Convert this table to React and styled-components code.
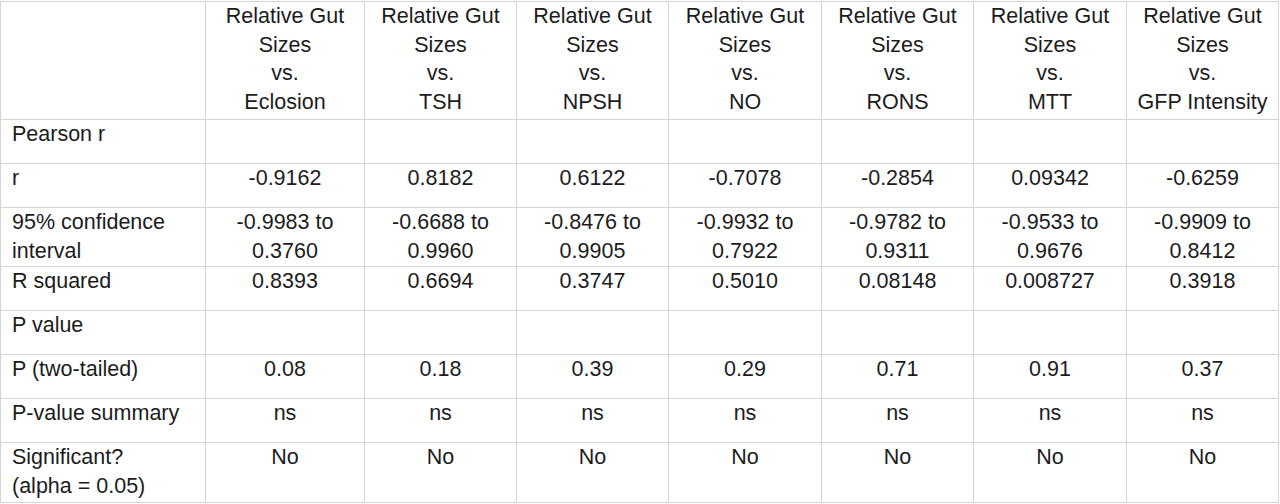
import React from "react";
import styled, { createGlobalStyle } from "styled-components";

const GlobalStyle = createGlobalStyle`
  html, body {
    margin: 0;
    padding: 0;
    background: #ffffff;
  }
  body {
    padding-top: 1px;
  }
`;

const Table = styled.table`
  border-collapse: collapse;
  table-layout: fixed;
  width: 1279px;
  font-family: "Liberation Sans", Arial, sans-serif;
  font-size: 21.5px;
  line-height: 28.5px;
  color: #1c1c1c;
`;

const Row = styled.tr`
  height: ${(props) => props.h}px;
`;

const Cell = styled.td`
  border: 1px solid #d4d4d4;
  padding: 0 4px;
  vertical-align: top;
  text-align: ${(props) => (props.label ? "left" : "center")};
  padding-left: ${(props) => (props.label ? "11px" : "4px")};
  white-space: pre-line;
  overflow: hidden;
`;

const widths = [205, 159, 152, 152, 153, 152, 153, 152];

const targets = ["Eclosion", "TSH", "NPSH", "NO", "RONS", "MTT", "GFP Intensity"];

const rows = [
  { label: "Pearson r", h: 44, values: [] },
  {
    label: "r",
    h: 44,
    values: ["-0.9162", "0.8182", "0.6122", "-0.7078", "-0.2854", "0.09342", "-0.6259"],
  },
  {
    label: "95% confidence\ninterval",
    h: 59,
    values: [
      "-0.9983 to\n0.3760",
      "-0.6688 to\n0.9960",
      "-0.8476 to\n0.9905",
      "-0.9932 to\n0.7922",
      "-0.9782 to\n0.9311",
      "-0.9533 to\n0.9676",
      "-0.9909 to\n0.8412",
    ],
  },
  {
    label: "R squared",
    h: 44,
    values: ["0.8393", "0.6694", "0.3747", "0.5010", "0.08148", "0.008727", "0.3918"],
  },
  { label: "P value", h: 44, values: [] },
  {
    label: "P (two-tailed)",
    h: 44,
    values: ["0.08", "0.18", "0.39", "0.29", "0.71", "0.91", "0.37"],
  },
  { label: "P-value summary", h: 44, values: Array(7).fill("ns") },
  { label: "Significant?\n(alpha = 0.05)", h: 60, values: Array(7).fill("No") },
];

export default function App() {
  return (
    <>
      <GlobalStyle />
      <Table>
        <colgroup>
          {widths.map((w, i) => (
            <col key={i} style={{ width: w }} />
          ))}
        </colgroup>
        <tbody>
          <Row h={118}>
            <Cell label />
            {targets.map((t) => (
              <Cell key={t}>{`Relative Gut\nSizes\nvs.\n${t}`}</Cell>
            ))}
          </Row>
          {rows.map((r) => (
            <Row key={r.label} h={r.h}>
              <Cell label>{r.label}</Cell>
              {targets.map((t, i) => (
                <Cell key={t}>{r.values[i] || ""}</Cell>
              ))}
            </Row>
          ))}
        </tbody>
      </Table>
    </>
  );
}
